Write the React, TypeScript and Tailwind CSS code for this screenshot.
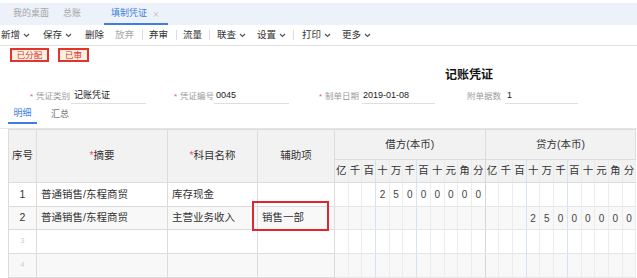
import React from 'react';

const digitLabels = ['亿', '千', '百', '十', '万', '千', '百', '十', '元', '角', '分'];

const Chevron = () => (
  <svg width="7" height="5" viewBox="0 0 7 5" className="ml-[3px]">
    <path d="M1 1l2.5 2.5L6 1" fill="none" stroke="#555" strokeWidth="1.2" />
  </svg>
);

type ToolItem = { t?: string; w: number; chevron?: boolean; muted?: boolean; sep?: boolean };

const toolItems: ToolItem[] = [
  { t: '新增', w: 42, chevron: true },
  { t: '保存', w: 42, chevron: true },
  { t: '删除', w: 30 },
  { t: '放弃', w: 27, muted: true },
  { sep: true, w: 7 },
  { t: '弃审', w: 27 },
  { sep: true, w: 7 },
  { t: '流量', w: 26 },
  { sep: true, w: 8 },
  { t: '联查', w: 40, chevron: true },
  { t: '设置', w: 36, chevron: true },
  { sep: true, w: 9 },
  { t: '打印', w: 40, chevron: true },
  { t: '更多', w: 40, chevron: true },
];

// digits for each row: index 0..10 for 借方, 11..21 for 贷方
const row1 = ['', '', '', '2', '5', '0', '0', '0', '0', '0', '0', '', '', '', '', '', '', '', '', '', '', ''];
const row2 = ['', '', '', '', '', '', '', '', '', '', '', '', '', '', '2', '5', '0', '0', '0', '0', '0', '0'];
const empty = Array(22).fill('');

const digitBorder = (i: number) => {
  // i = column index within 22; right border colour
  if (i === 10) return 'border-r-[#d6d6d6]';
  const k = i % 11;
  if (k === 2 || k === 5) return 'border-r-[#d3e3f2]';
  return 'border-r-[#ececec]';
};

type Row = { no: string; sum: string; acct: string; aux: string; digits: string[]; shade: boolean };

const rows: Row[] = [
  { no: '1', sum: '普通销售/东程商贸', acct: '库存现金', aux: '', digits: row1, shade: false },
  { no: '2', sum: '普通销售/东程商贸', acct: '主营业务收入', aux: '销售一部', digits: row2, shade: true },
  { no: '3', sum: '', acct: '', aux: '', digits: empty, shade: false },
  { no: '4', sum: '', acct: '', aux: '', digits: empty, shade: true },
];

const Field = ({ star, label, value, gap, lw, uw, vp }: { star: boolean; label: string; value: string; gap: number; lw: number; uw: number; vp: number }) => (
  <div className="flex items-end" style={{ marginLeft: gap }}>
    {star && <span className="w-[6px] text-[8px] leading-[15px] text-[#e5577a]">*</span>}
    <span className="text-[8.5px] leading-[15px] text-[#9a9a9a]" style={{ width: lw }}>{label}</span>
    <div className="h-[16px] border-b border-[#dedede] text-[9px] leading-[15px] text-[#222]" style={{ width: uw, paddingLeft: vp }}>
      {value}
    </div>
  </div>
);

export default function App() {
  return (
    <div
      className="relative h-[278px] w-[637px] overflow-hidden bg-white"
      style={{ fontFamily: '"Liberation Sans", "Noto Sans CJK SC", sans-serif' }}
    >
      {/* tab bar */}
      <div className="h-[25px] border-t-[3px] border-white bg-[#edf2fa]">
        <div className="flex h-[22px] items-stretch text-[9px]">
          <div className="ml-[13px] flex items-center text-[#a5a5a5]">我的桌面</div>
          <div className="ml-[14px] flex items-center text-[#a5a5a5]">总账</div>
          <div className="ml-[23px] flex items-center border-b-2 border-[#3d7fe0] pl-[7px] pr-[9px] pt-[2px] text-[#3d7fe0]">
            填制凭证
            <span className="ml-[6px] text-[10px] text-[#c4c4c4]">×</span>
          </div>
        </div>
      </div>

      {/* toolbar */}
      <div className="flex h-[21px] items-center border-b border-[#e2e2e2] pl-[1px] text-[9.5px] text-[#333]">
        {toolItems.map((it, i) =>
          it.sep ? (
            <div key={i} className="flex h-full items-center" style={{ width: it.w }}>
              <div className="h-[10px] w-px bg-[#dddddd]" />
            </div>
          ) : (
            <div key={i} className={`flex items-center ${it.muted ? 'text-[#a8a8a8]' : ''}`} style={{ width: it.w }}>
              {it.t}
              {it.chevron && <Chevron />}
            </div>
          )
        )}
      </div>

      {/* status badges */}
      <div className="mt-[2px] flex h-[14px] items-stretch text-[8.5px]">
        <div className="ml-[10px] flex w-[39px] items-center justify-center border-2 border-[#e0342c] bg-[#fbefe0] text-[#e0342c]">已分配</div>
        <div className="ml-[9px] flex w-[31px] items-center justify-center border-2 border-[#e0342c] bg-[#fbefe0] text-[#e0342c]">已审</div>
      </div>

      {/* title */}
      <div className="h-[26px] pl-[445px] text-[12px] font-bold leading-[26px] text-[#111]">记账凭证</div>

      {/* header fields */}
      <div className="flex h-[16px]">
        <Field star label="凭证类别" value="记账凭证" gap={30} lw={35} uw={75} vp={3} />
        <Field star label="凭证编号" value="0045" gap={28} lw={34} uw={75} vp={2} />
        <Field star label="制单日期" value="2019-01-08" gap={30} lw={37} uw={73} vp={1} />
        <Field star={false} label="附单据数" value="1" gap={32} lw={38} uw={73} vp={2} />
      </div>

      {/* detail tabs */}
      <div className="flex h-[25px] border-b border-[#e6e6e6] text-[9px]">
        <div className="ml-[8px] mt-[1px] flex h-[19px] w-[29px] items-center justify-center border-b-2 border-[#3d7fe0] text-[#3d7fe0]">明细</div>
        <div className="ml-[14px] mt-[1px] flex h-[19px] items-center text-[#777]">汇总</div>
      </div>

      {/* voucher table */}
      <table className="ml-[8px] w-[628px] table-fixed border-collapse text-[10.5px] text-[#333]">
        <colgroup>
          <col className="w-[28px]" />
          <col className="w-[131px]" />
          <col className="w-[90px]" />
          <col className="w-[77px]" />
          {Array.from({ length: 22 }).map((_, i) => (
            <col key={i} className="w-[13.7px]" />
          ))}
        </colgroup>
        <thead className="bg-[#f2f2f2]">
          <tr className="h-[30px]">
            <th rowSpan={2} className="border border-[#dcdcdc] font-normal">序号</th>
            <th rowSpan={2} className="border border-[#dcdcdc] font-normal">
              <span className="text-[#e5577a]">*</span>摘要
            </th>
            <th rowSpan={2} className="border border-[#dcdcdc] font-normal">
              <span className="text-[#e5577a]">*</span>科目名称
            </th>
            <th rowSpan={2} className="border border-[#dcdcdc] font-normal">辅助项</th>
            <th colSpan={11} className="border border-[#dcdcdc] font-normal">借方(本币)</th>
            <th colSpan={11} className="border border-[#dcdcdc] font-normal">贷方(本币)</th>
          </tr>
          <tr className="h-[23px]">
            {[...digitLabels, ...digitLabels].map((d, i) => (
              <th key={i} className={`border border-[#dcdcdc] p-0 font-normal ${digitBorder(i)}`}>{d}</th>
            ))}
          </tr>
        </thead>
        <tbody>
          {rows.map((r, ri) => (
            <tr key={ri} className={`${ri === 1 ? 'h-[23px]' : 'h-[24px]'} ${r.shade ? 'bg-[#f8f8f8]' : 'bg-white'}`}>
              <td className={`border border-[#dcdcdc] text-center ${ri > 1 ? 'text-[7px] text-[#cccccc]' : ''}`}>{r.no}</td>
              <td className="truncate border border-[#dcdcdc] px-[4px]">{r.sum}</td>
              <td className="truncate border border-[#dcdcdc] px-[4px]">{r.acct}</td>
              <td className="truncate border border-[#dcdcdc] px-[4px]">{r.aux}</td>
              {r.digits.map((d, i) => (
                <td key={i} className={`border border-[#e6e6e6] p-0 text-center text-[10px] text-[#444] ${digitBorder(i)}`}>{d}</td>
              ))}
            </tr>
          ))}
        </tbody>
      </table>

      {/* highlight around auxiliary item */}
      <div className="absolute left-[252px] top-[201px] h-[30px] w-[77px] border-2 border-[#e0262a]" />
    </div>
  );
}
